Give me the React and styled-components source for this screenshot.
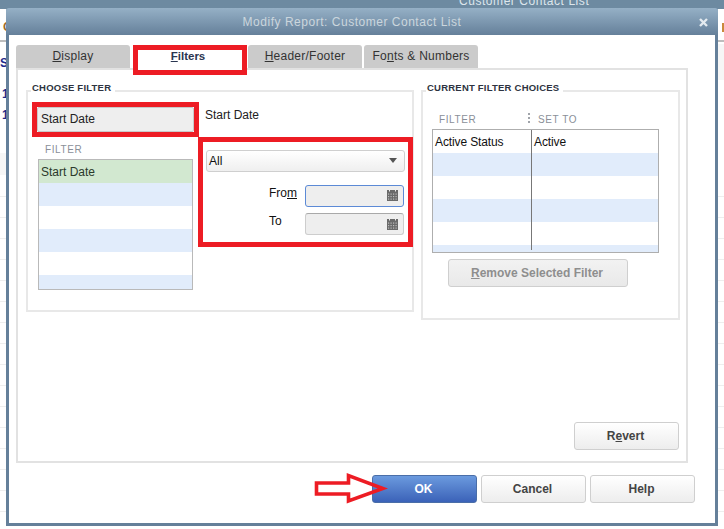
import React from "react";
import styled, { createGlobalStyle } from "styled-components";

const Global = createGlobalStyle`
  html, body { margin: 0; padding: 0; background: #fff; }
  body { font-family: "Liberation Sans", Arial, sans-serif; font-size: 12px; color: #222; }
`;

const Page = styled.div`
  position: relative;
  width: 724px;
  height: 529px;
  overflow: hidden;
  background: repeating-linear-gradient(#fff 0 20px, #eeeeee 20px 21px) 0 8px;
`;
const BackTitle = styled.div`
  height: 9px;
  background: #6d8aa1;
  color: #dde6ec;
  font-size: 12px;
  line-height: 2px;
  padding-left: 459px;
  letter-spacing: 0.55px;
`;
const BackBar = styled.div`
  height: 31px;
  background: #fff;
  border-bottom: 2px solid #bdbdbd;
`;
const BackStrip = styled.div`
  height: 154px;
  background: #fff;
`;
const BackGlyph = styled.div`
  position: absolute;
  left: ${p => p.$x}px;
  top: ${p => p.$y}px;
  color: ${p => p.$c || "#1c2a8c"};
  font-weight: bold;
  font-size: 12px;
`;
const BackMark = styled.div`
  position: absolute;
  left: 722px;
  top: 23px;
  width: 2px;
  height: 9px;
  background: #c9893c;
`;
const BackPanel = styled.div`
  position: absolute;
  left: ${p => p.$x}px;
  top: ${p => p.$y}px;
  width: 6px;
  height: ${p => p.$h}px;
  background: #f6f6f6;
`;

const Dialog = styled.div`
  position: absolute;
  left: 6px;
  top: 8px;
  width: 712px;
  height: 518px;
  box-sizing: border-box;
  border: 3px solid #65809a;
  border-top: 0;
  border-radius: 3px 3px 0 0;
  background: #fff;
  display: flex;
  flex-direction: column;
`;
const TitleBar = styled.div`
  height: 27px;
  margin: 0 -3px;
  flex: none;
  background: linear-gradient(#95b0c6, #65809a);
  color: #cbd6dd;
  font-size: 12px;
  letter-spacing: 0.52px;
  display: flex;
  align-items: center;
  justify-content: center;
  position: relative;
  padding-right: 20px;
  border-radius: 3px 3px 0 0;
`;
const Close = styled.svg`
  position: absolute;
  right: 10px;
  top: 10px;
`;
const Body = styled.div`
  flex: 1;
  padding: 10px 27px 0 7px;
  display: flex;
  flex-direction: column;
`;
const Tabs = styled.div`
  display: flex;
  height: 23px;
  align-items: flex-start;
`;
const Tab = styled.div`
  width: ${p => p.$w}px;
  margin-right: ${p => p.$mr}px;
  height: 23px;
  box-sizing: border-box;
  background: #cbcbcb;
  border-radius: 3px 3px 0 0;
  font-size: 12px;
  color: #333;
  letter-spacing: 0.25px;
  display: flex;
  align-items: center;
  justify-content: center;
  padding-bottom: 1px;
  u { text-underline-offset: 1px; }
`;
const ActiveTab = styled.div`
  width: 114px;
  height: 30px;
  margin-right: 1px;
  box-sizing: border-box;
  border: 5px solid #ed1c24;
  background: #fff;
  font-size: 11.5px;
  font-weight: bold;
  color: #2a3550;
  position: relative;
  z-index: 1;
  display: flex;
  justify-content: center;
  padding-right: 4px;
  line-height: 12px;
  u { text-underline-offset: 1px; }
`;
const Panel = styled.div`
  width: 672px;
  height: 395px;
  box-sizing: border-box;
  border: 2px solid #e2e2e2;
  padding: 20px 7px 0 8px;
  display: flex;
  gap: 7px;
  align-items: flex-start;
`;
const Group = styled.div`
  position: relative;
  box-sizing: border-box;
  width: ${p => p.$w}px;
  height: ${p => p.$h}px;
  border: 2px solid #e8e8e8;
`;
const GroupLabel = styled.div`
  position: absolute;
  left: 3px;
  top: -10px;
  background: #fff;
  padding: 0 4px 0 1px;
  font-size: 9.5px;
  font-weight: bold;
  letter-spacing: 0.22px;
  line-height: 12px;
  color: #2d3340;
`;
const ChooseLayout = styled.div`
  display: flex;
  padding-top: 10px;
  margin-left: 4px;
`;
const LeftCol = styled.div`
  width: 167px;
  flex: none;
  display: flex;
  flex-direction: column;
`;
const FilterNameBox = styled.div`
  height: 35px;
  box-sizing: border-box;
  border: 5px solid #ed1c24;
  position: relative;
  z-index: 1;
`;
const FilterName = styled.div`
  height: 25px;
  box-sizing: border-box;
  background: #eeeeee;
  border: 1px solid #c9c9c9;
  border-radius: 2px;
  padding-left: 3px;
  line-height: 22px;
  font-size: 12px;
  color: #222;
`;
const ColHeader = styled.div`
  font-size: 10px;
  letter-spacing: 0.6px;
  color: #8a8f98;
  line-height: 12px;
`;
const ListHeader = styled(ColHeader)`
  padding: 7px 0 3px 13px;
`;
const ListBox = styled.div`
  margin-left: 6px;
  width: 155px;
  height: 131px;
  box-sizing: border-box;
  border: 1px solid #b9b9b9;
  overflow: hidden;
`;
const Row = styled.div`
  height: 23px;
  flex: none;
  font-size: 12px;
  line-height: 25px;
  padding-left: 2px;
  color: ${p => (p.$green ? "#2b3a2b" : "#111")};
  background: ${p => (p.$green ? "#d2e8d0" : p.$alt ? "#e1ecfb" : "#fff")};
`;
const RightCol = styled.div`
  flex: none;
  width: 215px;
  margin-left: -1px;
  display: flex;
  flex-direction: column;
`;
const CurrentName = styled.div`
  height: 35px;
  padding-left: 7px;
  font-size: 12px;
  line-height: 26px;
  color: #222;
`;
const DateBox = styled.div`
  height: 110px;
  box-sizing: border-box;
  border: 5px solid #ed1c24;
  padding: 8px 3px 0 3px;
  display: flex;
  flex-direction: column;
`;
const SelectBox = styled.div`
  height: 22px;
  box-sizing: border-box;
  border: 1px solid #cfcfcf;
  border-radius: 3px;
  background: linear-gradient(#fff, #efefef);
  display: flex;
  align-items: center;
  justify-content: space-between;
  padding: 0 7px 0 2px;
  font-size: 12px;
  color: #111;
  margin-bottom: 13px;
`;
const Caret = styled.div`
  width: 0;
  height: 0;
  border-left: 4px solid transparent;
  border-right: 4px solid transparent;
  border-top: 5px solid #555;
`;
const DateRow = styled.div`
  display: flex;
  align-items: flex-start;
  height: 29px;
`;
const DateLabel = styled.div`
  width: 66px;
  padding-left: 63px;
  font-size: 12px;
  line-height: ${p => p.$lh}px;
  color: #111;
  u { text-underline-offset: 1px; }
`;
const DateField = styled.div`
  width: 99px;
  height: 22px;
  box-sizing: border-box;
  margin-left: -30px;
  border: 1px solid ${p => (p.$focus ? "#5c8ad6" : "#cdcdcd")};
  border-top-color: ${p => (p.$focus ? "#5c8ad6" : "#a9a9a9")};
  border-radius: 3px;
  background: #eeeeee;
  display: flex;
  align-items: center;
  justify-content: flex-end;
  padding-right: 5px;
`;
const Header = styled.div`
  display: flex;
  padding: 22px 0 3px 16px;
  height: 12px;
  position: relative;
`;
const Dots = styled.div`
  position: absolute;
  left: 105px;
  top: 21px;
  width: 2px;
  height: 11px;
  background: repeating-linear-gradient(#a0a4aa 0 2px, transparent 2px 4px);
`;
const FilterHead = styled(ColHeader)`
  width: 99px;
`;
const Table = styled.div`
  position: relative;
  margin-left: 9px;
  width: 227px;
  height: 124px;
  box-sizing: border-box;
  border: 1px solid #aeaeae;
  overflow: hidden;
`;
const TableRow = styled(Row)`
  display: flex;
  color: #111;
  letter-spacing: -0.12px;
`;
const Cell = styled.div`
  width: ${p => p.$w}px;
  flex: none;
`;
const Divider = styled.div`
  position: absolute;
  left: 98px;
  top: 0;
  bottom: 2px;
  width: 1px;
  background: #777;
`;
const Button = styled.div`
  box-sizing: border-box;
  width: ${p => p.$w}px;
  height: 28px;
  padding-right: 2px;
  border: 1px solid ${p => (p.$primary ? "#4a6ea8" : "#cfcfcf")};
  border-radius: 3px;
  background: ${p =>
    p.$primary ? "linear-gradient(#6b9ade, #3b62b8)" : p.$disabled ? "linear-gradient(#f2f2f2, #e9e9e9)" : "linear-gradient(#fff, #ededed)"};
  color: ${p => (p.$primary ? "#fff" : p.$disabled ? "#8e8e8e" : "#444")};
  font-size: 12px;
  font-weight: bold;
  display: flex;
  align-items: center;
  justify-content: center;
  u { text-underline-offset: 1px; }
`;
const RemoveWrap = styled.div`
  margin: 6px 0 0 25px;
`;
const RightSide = styled.div`
  display: flex;
  flex-direction: column;
  align-items: flex-start;
`;
const RevertWrap = styled.div`
  margin: 102px 0 0 153px;
`;
const Footer = styled.div`
  display: flex;
  justify-content: flex-end;
  gap: 4px;
  padding: 12px 0 0 0;
  margin-right: -7px;
`;
const Arrow = styled.svg`
  position: absolute;
  left: 314px;
  top: 472px;
  z-index: 2;
`;

const CalIcon = () => (
  <svg width="11" height="11" viewBox="0 0 11 11">
    <rect x="0" y="0" width="11" height="11" fill="#6a6a6a" />
    <g fill="#bdbdbd">
      {[1, 3.5, 6, 8.5].map(x => [3.5, 6, 8.5].map(y => <rect key={`${x}-${y}`} x={x} y={y} width="1.2" height="1.2" />))}
    </g>
    <rect x="2" y="0" width="1" height="1.5" fill="#eee" />
    <rect x="8" y="0" width="1" height="1.5" fill="#eee" />
  </svg>
);

export default function App() {
  return (
    <Page>
      <Global />
      <BackTitle>Customer Contact List</BackTitle>
      <BackBar />
      <BackStrip />
      <BackGlyph $x={3} $y={20} $c="#9c6a2a">C</BackGlyph>
      <BackGlyph $x={0} $y={56}>S</BackGlyph>
      <BackGlyph $x={2} $y={87}>1</BackGlyph>
      <BackGlyph $x={2} $y={108}>1</BackGlyph>
      <BackMark />
      <BackPanel $x={718} $y={44} $h={36} />
      <BackPanel $x={0} $y={153} $h={22} />
      <Dialog>
        <TitleBar>
          Modify Report: Customer Contact List
          <Close width="9" height="9" viewBox="0 0 9 9">
            <path d="M1 1 L8 8 M8 1 L1 8" stroke="#e4eaef" strokeWidth="2.4" />
          </Close>
        </TitleBar>
        <Body>
          <Tabs>
            <Tab $w={114} $mr={3}><span><u>D</u>isplay</span></Tab>
            <ActiveTab><span><u>F</u>ilters</span></ActiveTab>
            <Tab $w={114} $mr={2}><span><u>H</u>eader/Footer</span></Tab>
            <Tab $w={114} $mr={0}><span>Fo<u>n</u>ts &amp; Numbers</span></Tab>
          </Tabs>
          <Panel>
            <Group $w={388} $h={222}>
              <GroupLabel>CHOOSE FILTER</GroupLabel>
              <ChooseLayout>
                <LeftCol>
                  <FilterNameBox>
                    <FilterName>Start Date</FilterName>
                  </FilterNameBox>
                  <ListHeader>FILTER</ListHeader>
                  <ListBox>
                    <Row $green>Start Date</Row>
                    <Row $alt />
                    <Row />
                    <Row $alt />
                    <Row />
                    <Row $alt />
                  </ListBox>
                </LeftCol>
                <RightCol>
                  <CurrentName>Start Date</CurrentName>
                  <DateBox>
                    <SelectBox>All<Caret /></SelectBox>
                    <DateRow>
                      <DateLabel $lh={16}>Fro<u>m</u></DateLabel>
                      <DateField $focus><CalIcon /></DateField>
                    </DateRow>
                    <DateRow>
                      <DateLabel $lh={17}>To</DateLabel>
                      <DateField><CalIcon /></DateField>
                    </DateRow>
                  </DateBox>
                </RightCol>
              </ChooseLayout>
            </Group>
            <RightSide>
              <Group $w={259} $h={230}>
                <GroupLabel>CURRENT FILTER CHOICES</GroupLabel>
                <Header>
                  <FilterHead>FILTER</FilterHead>
                  <Dots />
                  <ColHeader>SET TO</ColHeader>
                </Header>
                <Table>
                  <TableRow><Cell $w={99}>Active Status</Cell><Cell $w={120}>Active</Cell></TableRow>
                  <TableRow $alt />
                  <TableRow />
                  <TableRow $alt />
                  <TableRow />
                  <TableRow $alt />
                  <Divider />
                </Table>
                <RemoveWrap>
                  <Button $w={180} $disabled><span><u>R</u>emove Selected Filter</span></Button>
                </RemoveWrap>
              </Group>
              <RevertWrap>
                <Button $w={105}><span>R<u>e</u>vert</span></Button>
              </RevertWrap>
            </RightSide>
          </Panel>
          <Footer>
            <Button $w={105} $primary>OK</Button>
            <Button $w={105}>Cancel</Button>
            <Button $w={105}>Help</Button>
          </Footer>
        </Body>
      </Dialog>
      <Arrow width="74" height="32" viewBox="0 0 74 32">
        <path d="M2.5 11 H34.5 V3.5 L69 16.5 L34.5 29 V22 H2.5 Z" fill="none" stroke="#ed1c24" strokeWidth="3.6" />
      </Arrow>
    </Page>
  );
}
